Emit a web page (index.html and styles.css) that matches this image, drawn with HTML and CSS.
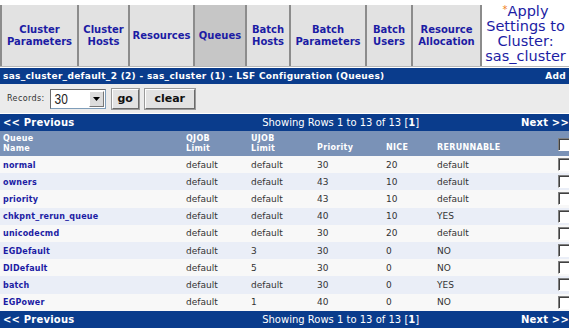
FILE: index.html
```html
<!DOCTYPE html>
<html lang="en">
<head>
    <meta charset="UTF-8">
    <title>LSF Configuration (Queues)</title>
    <link rel="stylesheet" href="styles.css">
</head>
<body>

<!-- Configuration tabs -->
<div class="tabs">
    <a class="tab" href="#"><span>Cluster<br>Parameters</span></a>
    <a class="tab" href="#"><span>Cluster<br>Hosts</span></a>
    <a class="tab" href="#"><span>Resources</span></a>
    <a class="tab active" href="#"><span>Queues</span></a>
    <a class="tab" href="#"><span>Batch<br>Hosts</span></a>
    <a class="tab" href="#"><span>Batch<br>Parameters</span></a>
    <a class="tab" href="#"><span>Batch<br>Users</span></a>
    <a class="tab" href="#"><span>Resource<br>Allocation</span></a>
    <a class="tab apply" href="#"><span class="apply-text"><span class="star">*</span>Apply<br>Settings to<br>Cluster:<br>sas_cluster</span></a>
</div>

<div class="titlebar">
    <span>sas_cluster_default_2 (2) - sas_cluster (1) - LSF Configuration (Queues)</span>
    <a href="#">Add</a>
</div>

<!-- Records filter -->
<div class="filter">
    <span class="filter-label">Records:</span>
    <div class="select">
        <span class="select-value">30</span>
        <span class="select-btn">
            <svg width="7" height="4" viewBox="0 0 7 4"><polygon points="0,0 7,0 3.5,4" fill="#000"/></svg>
        </span>
    </div>
    <button class="btn">go</button>
    <button class="btn">clear</button>
</div>

<div class="pager">
    <a href="#">&lt;&lt; Previous</a>
    <span class="pager-info">Showing Rows 1 to 13 of 13 [<b>1</b>]</span>
    <a href="#">Next &gt;&gt;</a>
</div>

<table class="grid">
    <colgroup>
        <col class="c-name"><col class="c-qjob"><col class="c-ujob"><col class="c-prio"><col class="c-nice"><col class="c-rerun"><col class="c-check">
    </colgroup>
    <thead>
        <tr>
            <th>Queue<br>Name</th>
            <th>QJOB<br>Limit</th>
            <th>UJOB<br>Limit</th>
            <th class="low">Priority</th>
            <th class="low">NICE</th>
            <th class="low">RERUNNABLE</th>
            <th><input type="checkbox" class="check"></th>
        </tr>
    </thead>
    <tbody id="queueRows">
    </tbody>
</table>

<div class="pager">
    <a href="#">&lt;&lt; Previous</a>
    <span class="pager-info">Showing Rows 1 to 13 of 13 [<b>1</b>]</span>
    <a href="#">Next &gt;&gt;</a>
</div>

<script>
    const queues = [
        ['normal', 'default', 'default', 30, 20, 'default'],
        ['owners', 'default', 'default', 43, 10, 'default'],
        ['priority', 'default', 'default', 43, 10, 'default'],
        ['chkpnt_rerun_queue', 'default', 'default', 40, 10, 'YES'],
        ['unicodecmd', 'default', 'default', 30, 20, 'default'],
        ['EGDefault', 'default', '3', 30, 0, 'NO'],
        ['DIDefault', 'default', '5', 30, 0, 'NO'],
        ['batch', 'default', 'default', 30, 0, 'YES'],
        ['EGPower', 'default', '1', 40, 0, 'NO']
    ];

    const rows = document.getElementById('queueRows');
    queues.forEach(q => {
        rows.innerHTML += `
            <tr>
                <td><a href="#">${q[0]}</a></td>
                <td>${q[1]}</td>
                <td>${q[2]}</td>
                <td>${q[3]}</td>
                <td>${q[4]}</td>
                <td>${q[5]}</td>
                <td><input type="checkbox" class="check"></td>
            </tr>
        `;
    });
</script>

</body>
</html>
```

FILE: styles.css
```css
* {
    margin: 0;
    padding: 0;
    box-sizing: border-box;
}

html, body {
    overflow: hidden;
}

body {
    font-family: 'DejaVu Sans', Verdana, sans-serif;
    background-color: #fff;
    color: #333;
}

a {
    text-decoration: none;
}

/* Tabs */
.tabs {
    display: grid;
    grid-template-columns: 77px 51px 65px 52px 44px 76px 46px 69px 1fr;
    padding-top: 5px;
    border-bottom: 1px solid #b8b8b8;
}

.tab {
    height: 61px;
    display: flex;
    align-items: center;
    justify-content: center;
    text-align: center;
    background-color: #e2e2e2;
    border-left: 2px solid #8c8c8c;
    color: #1c1ca4;
    font-size: 10px;
    font-weight: bold;
    line-height: 12px;
}

.tab.active {
    background-color: #c6c6c6;
}

.tab.apply {
    background-color: #fff;
    font-weight: normal;
    font-size: 14.5px;
    line-height: 15px;
    align-items: flex-start;
    overflow: visible;
}

.apply-text {
    margin-top: -3px;
}

.star {
    color: #f08020;
    font-size: 10px;
    vertical-align: 3px;
}

/* Title bar */
.titlebar {
    margin-top: 1px;
    height: 16px;
    background-color: #0a3c8c;
    color: #fff;
    font-size: 9px;
    font-weight: bold;
    letter-spacing: 0.3px;
    display: flex;
    justify-content: space-between;
    align-items: center;
    padding: 0 3px 0 3px;
}

.titlebar a {
    color: #fff;
}

/* Filter row */
.filter {
    height: 30px;
    background-color: #ebebeb;
    display: flex;
    align-items: center;
    padding-left: 7px;
    border-bottom: 1px solid #fff;
}

.filter-label {
    font-size: 8px;
    letter-spacing: 0.4px;
    color: #333;
    margin-right: 5px;
}

.select {
    width: 56px;
    height: 20px;
    background-color: #fff;
    border: 1px solid #7f9db9;
    border-top-color: #6a6a6a;
    border-left-color: #6a6a6a;
    display: flex;
    align-items: center;
    justify-content: space-between;
    padding: 1px;
}

.select-value {
    font-family: 'Liberation Sans Narrow', 'Liberation Sans', sans-serif;
    font-size: 14px;
    padding-left: 3px;
    color: #222;
    transform: scaleX(0.85);
    transform-origin: left;
}

.select-btn {
    width: 15px;
    height: 16px;
    background-color: #dcdcdc;
    border: 1px solid #fff;
    border-right-color: #777;
    border-bottom-color: #777;
    display: flex;
    align-items: center;
    justify-content: center;
}

.btn {
    height: 20px;
    margin-left: 6px;
    padding: 0 6px;
    font-family: 'DejaVu Sans', Verdana, sans-serif;
    font-size: 11px;
    font-weight: bold;
    color: #111;
    background-color: #e2e2e2;
    border: 1px solid #fff;
    border-right-color: #6a6a6a;
    border-bottom-color: #6a6a6a;
    outline: 1px solid #9a9a9a;
}

.btn:first-of-type {
    width: 27px;
    padding: 0;
}

.btn + .btn {
    width: 50px;
    padding: 0;
}

/* Pager */
.pager {
    height: 17px;
    background-color: #0a3c8c;
    color: #fff;
    display: flex;
    justify-content: space-between;
    align-items: center;
    padding: 0 0 0 3px;
    font-size: 10px;
}

.pager a {
    color: #fff;
    font-weight: bold;
    letter-spacing: 0.2px;
}

.pager-info {
    margin-left: 86px;
}

/* Grid */
.grid {
    width: 569px;
    border-collapse: collapse;
    table-layout: fixed;
}

.c-name { width: 183px; }
.c-qjob { width: 65px; }
.c-ujob { width: 66px; }
.c-prio { width: 69px; }
.c-nice { width: 51px; }
.c-rerun { width: 121px; }
.c-check { width: 14px; }

.grid th {
    height: 25px;
    background-color: #7a92b7;
    color: #fff;
    font-size: 8px;
    font-weight: bold;
    letter-spacing: 0.3px;
    line-height: 10px;
    text-align: left;
    vertical-align: top;
    padding: 3px 0 0 3px;
    white-space: nowrap;
    overflow: visible;
}

.grid th.low {
    vertical-align: bottom;
    padding-bottom: 3px;
}

.grid td {
    height: 17.2px;
    font-size: 9px;
    padding: 0 0 0 3px;
    white-space: nowrap;
    overflow: visible;
    color: #333;
}

.grid tbody tr:nth-child(odd) {
    background-color: #f8f8f8;
}

.grid tbody tr:nth-child(even) {
    background-color: #eaeef7;
}

.grid td a {
    color: #1c1ca4;
    font-weight: bold;
    font-size: 8px;
    letter-spacing: 0.2px;
}

.check {
    appearance: none;
    display: block;
    width: 13px;
    height: 13px;
    background-color: #fff;
    border: 1px solid #fff;
    border-top-color: #808080;
    border-left-color: #808080;
    box-shadow: inset 1px 1px 0 #404040;
    margin-left: 0;
}

.grid th .check {
    margin-top: 4px;
}
```
